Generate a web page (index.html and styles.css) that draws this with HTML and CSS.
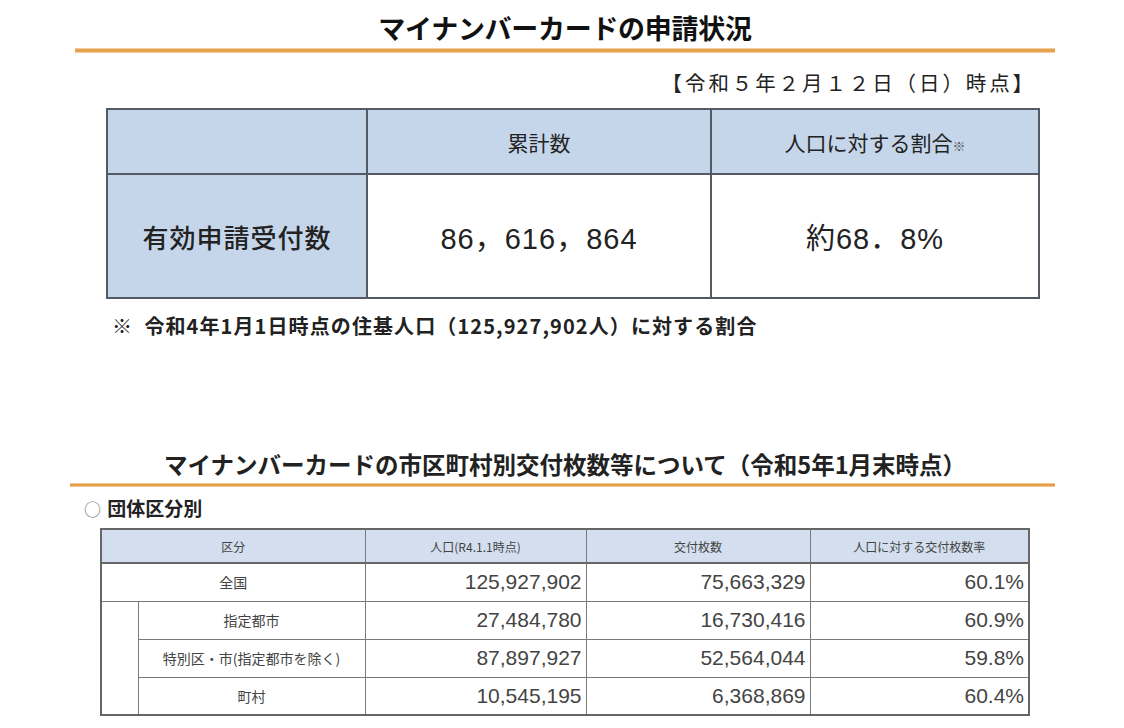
FILE: index.html
```html
<!DOCTYPE html>
<html lang="ja">
<head>
<meta charset="utf-8">
<link rel="stylesheet" href="styles.css">
</head>
<body>
<div class="page">
  <section class="sec1">
    <h1 class="title">マイナンバーカードの申請状況</h1>
    <div class="rule"></div>
    <p class="date">【令和５年２月１２日（日）時点】</p>
    <table class="t1">
      <colgroup><col class="c1"><col class="c2"><col class="c3"></colgroup>
      <tr class="t1-head">
        <th class="blue"></th>
        <th class="blue">累計数</th>
        <th class="blue">人口に対する割合<span class="kome">※</span></th>
      </tr>
      <tr class="t1-body">
        <td class="blue label">有効申請受付数</td>
        <td class="num">86，616，864</td>
        <td class="num">約68．8%</td>
      </tr>
    </table>
    <p class="note">※&nbsp; 令和4年1月1日時点の住基人口（125,927,902人）に対する割合</p>
  </section>

  <section class="sec2">
    <h2 class="title2">マイナンバーカードの市区町村別交付枚数等について（令和5年1月末時点）</h2>
    <div class="rule rule2"></div>
    <p class="sub"><span class="circle">○</span> 団体区分別</p>
    <table class="t2">
      <colgroup><col class="d0"><col class="d1"><col class="d2"><col class="d3"><col class="d4"></colgroup>
      <tr class="t2-head">
        <th colspan="2">区分</th>
        <th>人口(R4.1.1時点)</th>
        <th>交付枚数</th>
        <th>人口に対する交付枚数率</th>
      </tr>
      <tr>
        <td colspan="2" class="lab">全国</td>
        <td class="n">125,927,902</td>
        <td class="n">75,663,329</td>
        <td class="n">60.1%</td>
      </tr>
      <tr>
        <td rowspan="3" class="indent"></td>
        <td class="lab">指定都市</td>
        <td class="n">27,484,780</td>
        <td class="n">16,730,416</td>
        <td class="n">60.9%</td>
      </tr>
      <tr>
        <td class="lab">特別区・市(指定都市を除く)</td>
        <td class="n">87,897,927</td>
        <td class="n">52,564,044</td>
        <td class="n">59.8%</td>
      </tr>
      <tr>
        <td class="lab">町村</td>
        <td class="n">10,545,195</td>
        <td class="n">6,368,869</td>
        <td class="n">60.4%</td>
      </tr>
    </table>
  </section>
</div>
</body>
</html>
```

FILE: styles.css
```css
* { box-sizing: border-box; }
html, body { margin: 0; padding: 0; background: #ffffff; }
body {
  font-family: "Noto Sans CJK JP", "Noto Sans", sans-serif;
  color: #222;
  width: 1124px;
  height: 728px;
  overflow: hidden;
}
.page { padding-top: 10px; }

.sec1, .sec2 { display: flex; flex-direction: column; }

.title {
  margin: 0;
  width: 980px;
  margin-left: 75px;
  text-align: center;
  font-size: 27px;
  font-weight: 700;
  line-height: 36px;
  color: #111;
  letter-spacing: -0.3px;
}
.rule {
  margin-left: 75px;
  width: 980px;
  height: 5px;
  margin-top: 2px;
  background: linear-gradient(#f6d9ae, #e39a45 40%, #e39a45 60%, #f6d9ae);
}
.date {
  margin: 15px 0 0 0;
  width: 1036px;
  text-align: right;
  font-size: 20.5px;
  line-height: 28px;
  letter-spacing: 2.9px;
  color: #222;
}

.t1 {
  margin-left: 106px;
  margin-top: 12px;
  width: 932px;
  border-collapse: collapse;
  border: 2px solid #535a63;
  table-layout: fixed;
}
.t1 .c1 { width: 260px; }
.t1 .c2 { width: 344px; }
.t1 .c3 { width: 328px; }
.t1 th, .t1 td {
  border: 2px solid #535a63;
  padding: 0;
  text-align: center;
}
.blue { background: #c6d6ea; }
.t1-head { height: 65px; }
.t1-head th {
  font-size: 21px;
  font-weight: 400;
  color: #222;
}
.kome { font-size: 13px; color: #555; }
.t1-body { height: 124px; }
.t1 .label {
  font-size: 26px;
  font-weight: 500;
  color: #222;
  letter-spacing: 1px;
}
.t1 .num {
  font-family: "Liberation Sans", "Noto Sans CJK JP", sans-serif;
  font-size: 29px;
  font-weight: 400;
  color: #222;
  letter-spacing: 1px;
}
.note {
  margin: 14px 0 0 112px;
  font-size: 20px;
  font-weight: 700;
  line-height: 26px;
  letter-spacing: 1.1px;
  color: #222;
}

.sec2 { margin-top: 110px; }
.title2 {
  margin: 0;
  width: 980px;
  margin-left: 75px;
  text-align: center;
  font-size: 23.5px;
  font-weight: 700;
  line-height: 30px;
  color: #222;
}
.rule2 { margin-left: 70px; width: 985px; margin-top: 4px; height: 4px; }
.sub {
  margin: 8px 0 0 84px;
  font-size: 19px;
  font-weight: 700;
  line-height: 26px;
  color: #222;
}
.circle { font-weight: 400; color: #777; margin-right: 2px; font-size: 17px; }

.t2 {
  margin-left: 100px;
  margin-top: 6px;
  width: 928px;
  border-collapse: collapse;
  border: 2px solid #666;
  table-layout: fixed;
  font-family: "Liberation Sans", "Noto Sans CJK JP", sans-serif;
}
.t2 .d0 { width: 37px; }
.t2 .d1 { width: 227px; }
.t2 .d2 { width: 221px; }
.t2 .d3 { width: 224px; }
.t2 .d4 { width: 219px; }
.t2 th, .t2 td {
  border: 1px solid #7a7a7a;
  padding: 0;
}
.t2-head { height: 34px; }
.t2-head th {
  background: #d3dfee;
  font-family: "Noto Sans CJK JP", sans-serif;
  font-size: 12px;
  font-weight: 400;
  color: #444;
  text-align: center;
  border-bottom: 2px solid #666;
}
.t2 tr { height: 38px; }
.t2 .t2-head { height: 34px; }
.t2 .lab {
  text-align: center;
  font-family: "Noto Sans CJK JP", sans-serif;
  font-size: 14px;
  color: #444;
}
.t2 .n {
  text-align: right;
  padding-right: 4px;
  font-size: 21px;
  color: #444;
}
.t2 .indent { border-bottom: none; border-top: none; }
```
